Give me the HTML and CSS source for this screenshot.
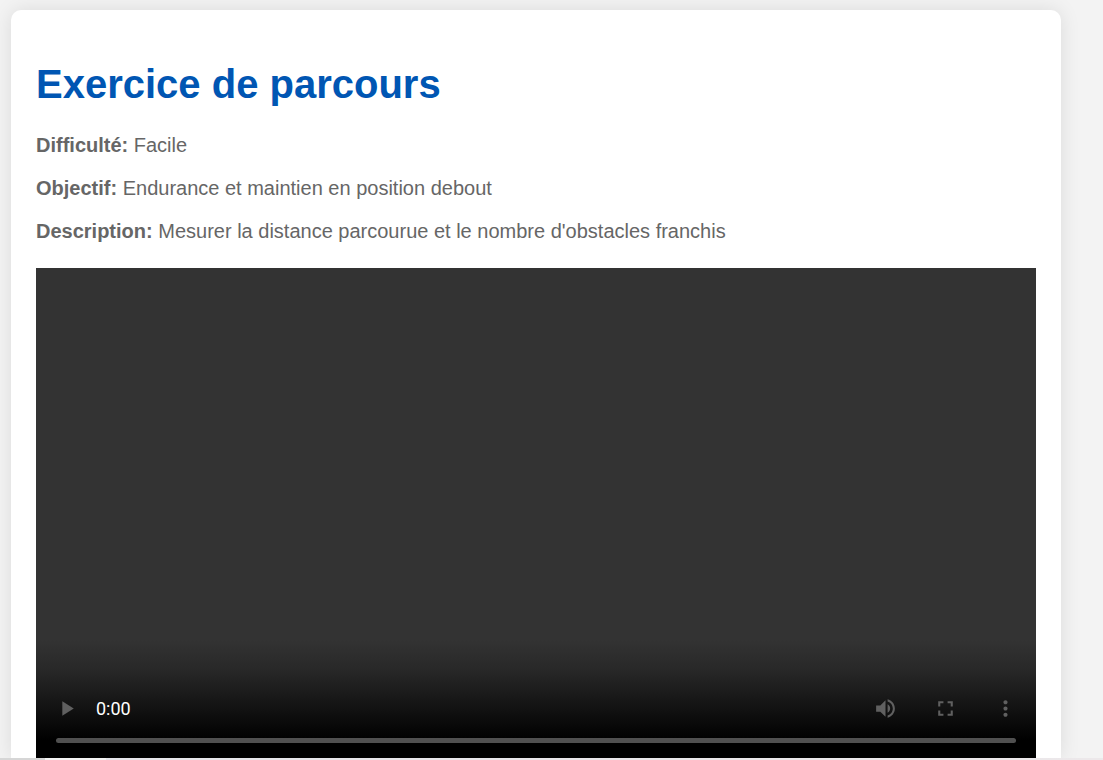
FILE: index.html
```html
<!DOCTYPE html>
<html lang="fr">
<head>
  <meta charset="utf-8">
  <meta name="viewport" content="width=device-width, initial-scale=1">
  <title>Exercice de parcours</title>
  <link rel="stylesheet" href="styles.css">
</head>
<body>
  <main class="card">
    <h1 class="title">Exercice de parcours</h1>
    <p class="detail"><strong>Difficulté:</strong> Facile</p>
    <p class="detail"><strong>Objectif:</strong> Endurance et maintien en position debout</p>
    <p class="detail"><strong>Description:</strong> Mesurer la distance parcourue et le nombre d'obstacles franchis</p>
    <section class="player" aria-label="Vidéo">
      <div class="controls">
        <div class="buttons">
          <button class="control" type="button" aria-label="Lecture" disabled>
            <svg viewBox="0 0 24 24"><path d="M7 5v14l11-7z"/></svg>
          </button>
          <span class="time">0:00</span>
          <button class="control" type="button" aria-label="Volume" disabled>
            <svg viewBox="0 0 24 24"><path d="M3 9v6h4l5 5V4L7 9H3zm13.5 3c0-1.77-1.02-3.29-2.5-4.03v8.05c1.48-.73 2.5-2.25 2.5-4.02zM14 3.23v2.06c2.89.86 5 3.54 5 6.71s-2.11 5.85-5 6.71v2.06c4.01-.91 7-4.49 7-8.77s-2.99-7.86-7-8.77z"/></svg>
          </button>
          <button class="control" type="button" aria-label="Plein écran" disabled>
            <svg viewBox="0 0 24 24"><path d="M7 14H5v5h5v-2H7v-3zm-2-4h2V7h3V5H5v5zm12 7h-3v2h5v-5h-2v3zM14 5v2h3v3h2V5h-5z"/></svg>
          </button>
          <button class="control" type="button" aria-label="Autres options" disabled>
            <svg viewBox="0 0 24 24"><path d="M12 8c1.1 0 2-.9 2-2s-.9-2-2-2-2 .9-2 2 .9 2 2 2zm0 2c-1.1 0-2 .9-2 2s.9 2 2 2 2-.9 2-2-.9-2-2-2zm0 6c-1.1 0-2 .9-2 2s.9 2 2 2 2-.9 2-2-.9-2-2-2z"/></svg>
          </button>
        </div>
        <input class="timeline" type="range" min="0" max="100" value="0" aria-label="Position de lecture" disabled>
      </div>
    </section>
  </main>
  <div class="edge"></div>
</body>
</html>
```
FILE: styles.css
```css
* {
  box-sizing: border-box;
}

body {
  display: flex;
  flex-direction: column;
  min-height: 100vh;
  margin: 0;
  padding-top: 10px;
  background: #f3f3f3;
  color: #666;
  font: 20px/23px "Liberation Sans", Arial, sans-serif;
}

.card {
  display: flex;
  flex: 1;
  flex-direction: column;
  margin: 0 42px 0 11px;
  padding: 50px 25px 0;
  border-radius: 10px 10px 0 0;
  background: #fff;
  box-shadow: 0 0 20px rgba(0, 0, 0, 0.1);
}

.title {
  margin: 0 0 26px;
  color: #0056b3;
  font-size: 40px;
  line-height: 48px;
}

.detail {
  margin: 0 0 20px;
}

.player {
  display: flex;
  flex: 1;
  flex-direction: column;
  justify-content: flex-end;
  margin-top: 5px;
  background: #333;
}

.controls {
  display: flex;
  flex-direction: column;
  padding: 48px 0 15px;
  background: linear-gradient(#333 0%, #282828 25%, #111 60%, #000 85%);
}

.buttons {
  display: flex;
  align-items: center;
  height: 41px;
  padding: 0 18px 0 19px;
}

.control {
  display: grid;
  flex: none;
  place-items: center;
  width: 25px;
  height: 41px;
  margin-left: 35px;
  padding: 0;
  border: 0;
  background: none;
}

.control:first-child {
  margin-left: 0;
}

.control svg {
  width: 25px;
  height: 25px;
  fill: #606060;
}

.time {
  flex: 1;
  margin-left: 16px;
  color: #fff;
  font-family: Roboto, sans-serif;
  font-size: 18px;
  line-height: 20px;
}

.timeline {
  height: 5px;
  margin: 9px 20px 0;
  border-radius: 3px;
  background: #505050;
  appearance: none;
}

.timeline::-webkit-slider-thumb {
  width: 0;
  height: 0;
  appearance: none;
}

.edge {
  position: relative;
  height: 2px;
  background: linear-gradient(90deg, #d6d6d6 45px, #f3f3f3 45px 106px, #e5e5ea 106px, #ece8ea);
}
```
